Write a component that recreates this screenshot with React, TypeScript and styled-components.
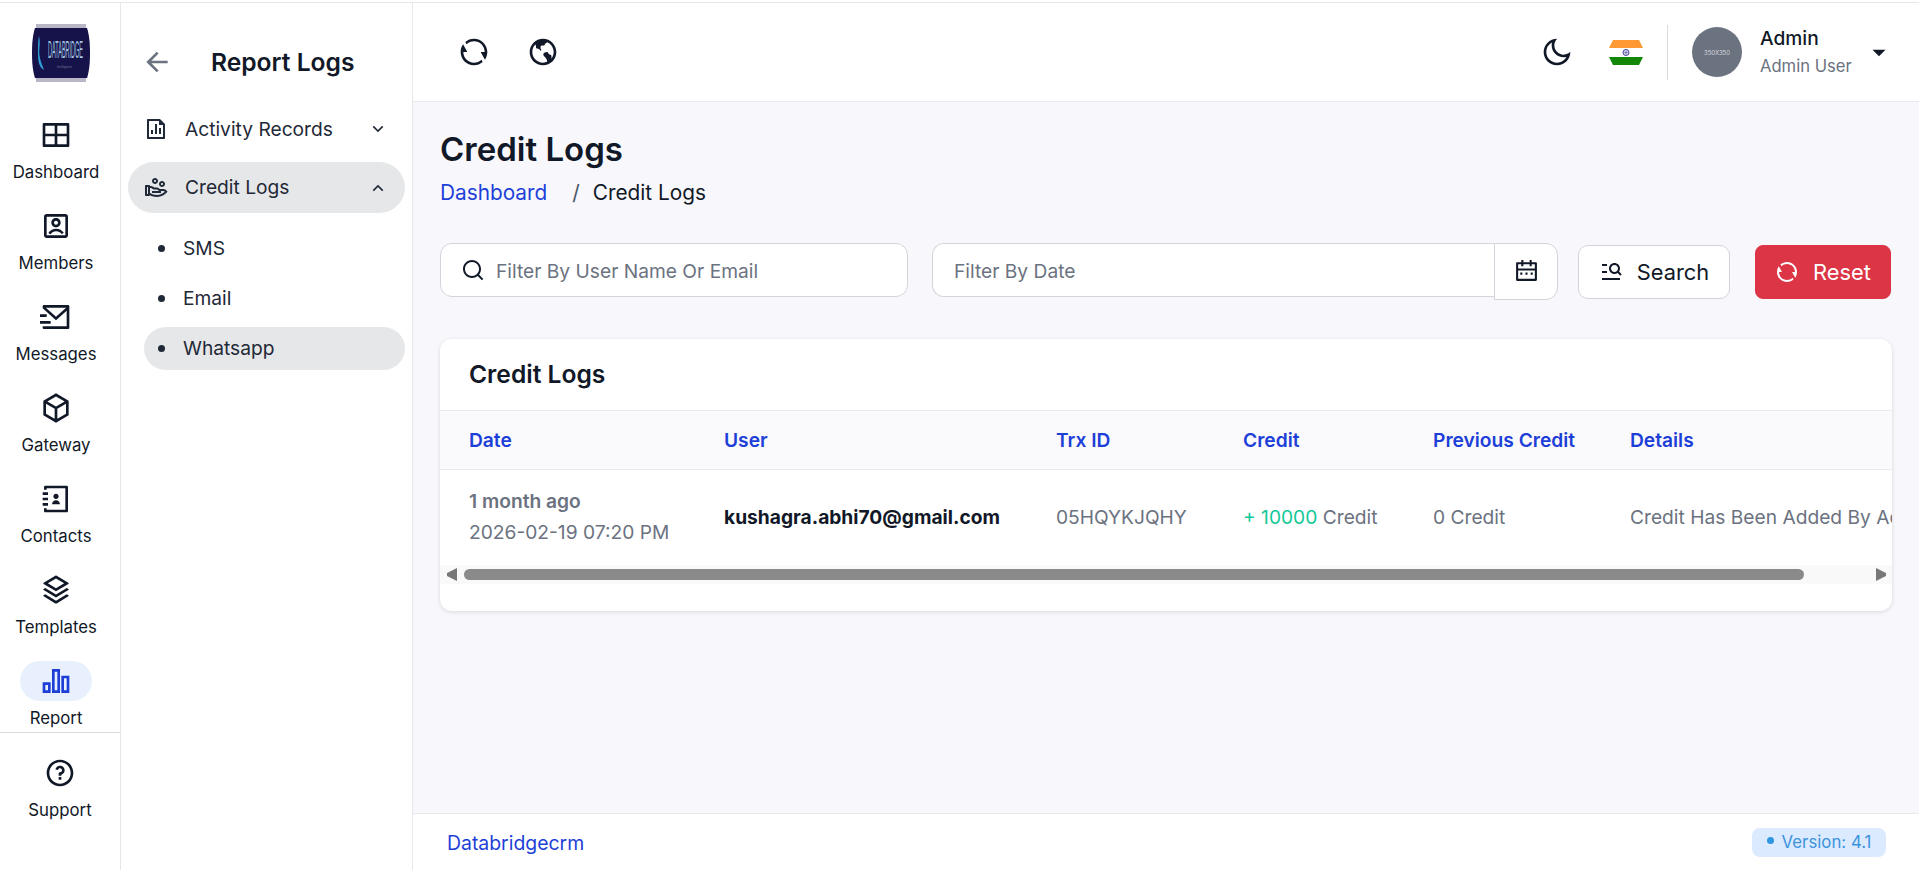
import styled, { createGlobalStyle } from 'styled-components';
import {
  RiLayoutGridLine,
  RiAccountBoxLine,
  RiMailSendLine,
  RiBox3Line,
  RiContactsBook3Line,
  RiStackLine,
  RiQuestionLine,
  RiFileChartLine,
  RiHandCoinLine,
  RiArrowLeftLine,
  RiArrowDownSLine,
  RiArrowUpSLine,
  RiArrowDownSFill,
  RiRefreshLine,
  RiEarthLine,
  RiMoonLine,
  RiSearchLine,
  RiCalendar2Line,
  RiMenuSearchLine,
} from 'react-icons/ri';

const GlobalStyle = createGlobalStyle`
  * { box-sizing: border-box; }
  html, body { margin: 0; padding: 0; height: 100%; background: #fff; overflow: hidden; }
  body { font-family: Inter, "Noto Sans", sans-serif; color: #111827; }
`;

const Shell = styled.div`
  height: 870px;
  padding-top: 2px;
  display: flex;
  flex-direction: column;
`;

const Body = styled.div`
  flex: 1;
  min-height: 0;
  display: flex;
  border-top: 1px solid #e5e7eb;
`;

const Rail = styled.aside`
  width: 121px;
  flex: none;
  border-right: 1px solid #e5e7eb;
  display: flex;
  flex-direction: column;
`;

const LogoWrap = styled.div`
  padding: 21px 0 0 32px;
  height: 112px;
  flex: none;
`;

const RailNav = styled.nav`
  padding-right: 8px;
  display: flex;
  flex-direction: column;
  gap: 23px;
`;

const RailItem = styled.a`
  display: flex;
  flex-direction: column;
  align-items: center;
  height: 68px;
  font-size: 16.8px;
  font-weight: 400;
  color: #111827;
`;

const RailIcon = styled.span<{ $active?: boolean }>`
  width: 72px;
  height: 41px;
  border-radius: 21px;
  display: flex;
  align-items: center;
  justify-content: center;
  font-size: 32px;
  color: ${(p) => (p.$active ? '#1d3fd8' : '#111827')};
  background: ${(p) => (p.$active ? '#e8f0fd' : 'transparent')};
`;

const RailLabel = styled.span`
  margin-top: 7px;
  line-height: 21px;
`;

const RailBottom = styled.div`
  margin-top: 3px;
  border-top: 1px solid #d8dbe2;
  padding-top: 20px;
`;

const Panel = styled.aside`
  width: 292px;
  flex: none;
  border-right: 1px solid #e5e7eb;
  padding: 37px 7px 0;
`;

const PanelHead = styled.div`
  height: 44px;
  padding-left: 13px;
  display: flex;
  align-items: center;
  gap: 38px;
  margin-bottom: 19px;
  color: #6b7280;
  font-size: 32px;

  svg { flex: none; }
`;

const PanelTitle = styled.h2`
  margin: 0;
  font-size: 24.6px;
  line-height: 30px;
  font-weight: 600;
  color: #111827;
`;

const MenuItem = styled.div<{ $open?: boolean }>`
  height: 51px;
  margin-bottom: 8px;
  padding: 0 17px 0 16px;
  border-radius: 26px;
  display: flex;
  align-items: center;
  gap: 17px;
  font-size: 19.2px;
  color: #1f2937;
  background: ${(p) => (p.$open ? '#e6e7e9' : 'transparent')};
`;

const MenuIcon = styled.span`
  font-size: 24px;
  display: flex;
  color: #1f2937;
`;

const MenuText = styled.span<{ $open?: boolean }>`
  flex: 1;
  padding-bottom: ${(p) => (p.$open ? '1px' : '0')};
  padding-top: ${(p) => (p.$open ? '0' : '1px')};
`;

const Chevron = styled.span`
  font-size: 20px;
  display: flex;
  color: #1f2937;
`;

const SubMenu = styled.ul`
  list-style: none;
  margin: 14px 0 0 16px;
  padding: 0;
  display: flex;
  flex-direction: column;
  gap: 7px;
`;

const SubItem = styled.li<{ $active?: boolean }>`
  height: 43px;
  padding: 0 0 2px 14px;
  border-radius: 22px;
  display: flex;
  align-items: center;
  gap: 18px;
  font-size: 19.2px;
  color: #1f2937;
  background: ${(p) => (p.$active ? '#e6e7e9' : 'transparent')};

  &::before {
    content: '';
    width: 7px;
    height: 7px;
    margin-top: 2px;
    border-radius: 50%;
    background: #1f2937;
  }
`;

const Main = styled.div`
  flex: 1;
  min-width: 0;
  display: flex;
  flex-direction: column;
  background: #f8f8fc;
`;

const Topbar = styled.header`
  height: 99px;
  flex: none;
  background: #fff;
  border-bottom: 1px solid #e9eaee;
  padding: 0 27px 0 45px;
  display: flex;
  align-items: center;
  justify-content: space-between;
`;

const TopGroup = styled.div`
  display: flex;
  align-items: center;
`;

const TopIcon = styled.span`
  width: 32px;
  height: 32px;
  margin-right: 37px;
  display: flex;
  align-items: center;
  justify-content: center;
  font-size: 32px;
  color: #111827;
`;

const MoonIcon = styled(TopIcon)`
  margin-right: 36px;
`;

const FlagWrap = styled.span`
  width: 34px;
  height: 25px;
  margin-right: 24px;
  display: flex;
`;

const TopDivider = styled.span`
  width: 1px;
  height: 55px;
  background: #d8dbe2;
  margin-right: 24px;
`;

const Avatar = styled.span`
  width: 50px;
  height: 50px;
  border-radius: 50%;
  background: #6b7280;
  color: #d7d9de;
  font-size: 6px;
  display: flex;
  align-items: center;
  justify-content: center;
`;

const UserInfo = styled.div`
  margin-left: 18px;
  width: 106px;
`;

const UserName = styled.div`
  font-size: 19.2px;
  line-height: 26px;
  margin-top: -1px;
  font-weight: 500;
  color: #111827;
`;

const UserRole = styled.div`
  font-size: 16.6px;
  line-height: 24px;
  margin-top: 3px;
  color: #6b7280;
`;

const Caret = styled.span`
  font-size: 26px;
  display: flex;
  color: #111827;
`;

const Content = styled.main`
  flex: 1;
  min-height: 0;
  padding: 27px 27px 0;
`;

const PageTitle = styled.h1`
  margin: 0;
  font-size: 33px;
  line-height: 40px;
  font-weight: 600;
  color: #111827;
`;

const Breadcrumb = styled.div`
  margin-top: 9px;
  height: 28px;
  display: flex;
  align-items: center;
  font-size: 20.8px;
  color: #111827;
`;

const CrumbLink = styled.a`
  color: #1d3fd8;
`;

const CrumbSep = styled.span`
  margin: 0 13px 0 25px;
  color: #4b5563;
`;

const FilterRow = styled.div`
  margin-top: 37px;
  display: flex;
  align-items: flex-start;
`;

const FieldBox = styled.div`
  width: 468px;
  height: 54px;
  flex: none;
  margin-right: 24px;
  background: #fff;
  border: 1px solid #d3d5dc;
  border-radius: 12px;
  display: flex;
  align-items: center;
  padding: 0 22px 0 20px;
  gap: 11px;
  font-size: 24px;
  color: #111827;
`;

const Placeholder = styled.span`
  font-size: 19.2px;
  padding-top: 2px;
  color: #6b7280;
`;

const DateGroup = styled.div`
  flex: 1;
  display: flex;
  margin-right: 20px;
`;

const DateField = styled.div`
  flex: 1;
  height: 54px;
  background: #fff;
  border: 1px solid #d3d5dc;
  border-right: 0;
  border-radius: 12px 0 0 12px;
  display: flex;
  align-items: center;
  padding-left: 21px;
`;

const DateButton = styled.span`
  width: 64px;
  height: 57px;
  background: #fff;
  border: 1px solid #d3d5dc;
  border-radius: 0 12px 12px 0;
  display: flex;
  align-items: center;
  justify-content: center;
  font-size: 25px;
  color: #111827;
`;

const ActionButton = styled.button`
  height: 54px;
  margin-top: 2px;
  flex: none;
  font: inherit;
  font-size: 21.8px;
  display: flex;
  align-items: center;
  justify-content: center;
  gap: 14px;
  padding: 0;

  svg { flex: none; }
`;

const SearchButton = styled(ActionButton)`
  width: 152px;
  margin-right: 25px;
  border-radius: 10px;
  border: 1px solid #d3d5dc;
  background: #fff;
  color: #111827;
`;

const ResetButton = styled(ActionButton)`
  width: 136px;
  margin-right: 1px;
  border-radius: 8px;
  border: 1px solid #dc3545;
  background: #dc3545;
  color: #fff;
`;

const Card = styled.section`
  margin-top: 39px;
  height: 272px;
  background: #fff;
  border-radius: 12px;
  box-shadow: 0 1px 4px rgba(17, 24, 39, 0.14);
  overflow: hidden;
`;

const CardHead = styled.div`
  height: 72px;
  padding: 0 29px 2px;
  display: flex;
  align-items: center;
  border-bottom: 1px solid #eaebef;
`;

const CardTitle = styled.h3`
  margin: 0;
  font-size: 24.6px;
  font-weight: 600;
  color: #111827;
`;

const TableClip = styled.div`
  overflow: hidden;
`;

const Table = styled.table`
  width: 1528px;
  table-layout: fixed;
  border-collapse: separate;
  border-spacing: 0;
  font-size: 19.2px;
`;

const Th = styled.th<{ $w: number }>`
  width: ${(p) => p.$w}px;
  height: 59px;
  padding: 0 0 0 29px;
  text-align: left;
  font-weight: 600;
  color: #1d3fd8;
  background: #fafafc;
  border-bottom: 1px solid #eaebef;
`;

const Td = styled.td`
  height: 95px;
  padding: 0 0 2px 29px;
  color: #6b7280;
  white-space: nowrap;
`;

const WhenAgo = styled.div`
  font-weight: 600;
  line-height: 24px;
`;

const WhenExact = styled.div`
  margin-top: 7px;
  line-height: 24px;
`;

const UserMail = styled.span`
  font-weight: 700;
  color: #111827;
`;

const Plus = styled.span`
  color: #10c998;
`;

const ScrollBar = styled.div`
  height: 19px;
  padding: 0 6px 0 7px;
  background: #f9f9f9;
  display: flex;
  align-items: center;
  justify-content: space-between;
  color: #777;
`;

const ScrollThumb = styled.div`
  width: 1340px;
  height: 11px;
  margin-right: auto;
  margin-left: 7px;
  border-radius: 6px;
  background: #8a8a8a;
`;

const Footer = styled.footer`
  height: 57px;
  flex: none;
  background: #fff;
  border-top: 1px solid #e9eaee;
  padding: 0 33px 0 34px;
  display: flex;
  align-items: center;
  justify-content: space-between;
`;

const FootLink = styled.a`
  font-size: 19.4px;
  padding-top: 2px;
  color: #1d3fd8;
`;

const VersionBadge = styled.span`
  height: 29px;
  width: 134px;
  border-radius: 8px;
  background: #dbeafe;
  color: #3b93dd;
  font-size: 16.8px;
  display: flex;
  align-items: center;
  justify-content: center;
  gap: 8px;

  &::before {
    content: '';
    width: 7px;
    height: 7px;
    border-radius: 50%;
    background: #2f96e0;
    margin-top: -3px;
  }
`;

function Logo() {
  return (
    <svg width="58" height="58" viewBox="0 0 58 58">
      <rect x="4" y="0" width="50" height="58" fill="#b9b6c6" />
      <path d="M3 4h52c2 6 3 14 3 25s-1 19-3 25H3C1 48 0 40 0 29S1 10 3 4z" fill="#16124a" />
      <path d="M7 12c2 8-1 14 1 22 1 5 3 9 4 12-4-2-6-7-6-16s0-13 1-18z" fill="#2f9fd8" />
      <g transform="translate(16 34) scale(1 3.8)">
        <text fontFamily="Liberation Sans, sans-serif" fontSize="6.4" fill="#a3c8e0" textLength="35" lengthAdjust="spacingAndGlyphs">
          DATABRIDGE
        </text>
      </g>
      <text x="25" y="44" fontFamily="Liberation Sans, sans-serif" fontSize="3" fill="#6e7796">
        Intelligence
      </text>
    </svg>
  );
}

function IndiaFlag() {
  return (
    <svg width="34" height="25" viewBox="0 0 34 25">
      <defs>
        <clipPath id="flagClip">
          <path d="M4 0h26l4 8v9l-4 8H4L0 17V8z" />
        </clipPath>
      </defs>
      <g clipPath="url(#flagClip)">
        <rect width="34" height="8" fill="#ff9933" />
        <rect y="8" width="34" height="9" fill="#fff" />
        <rect y="17" width="34" height="8" fill="#138808" />
      </g>
      <circle cx="17" cy="12.5" r="3" fill="none" stroke="#2b2b90" strokeWidth="0.9" />
      <path d="M15 10.5l4 4M19 10.5l-4 4M17 9.8v5.4M14.3 12.5h5.4" stroke="#2b2b90" strokeWidth="0.4" />
    </svg>
  );
}

function ReportBars() {
  return (
    <svg width="32" height="32" viewBox="0 0 24 24" fill="currentColor">
      <path d="M2 13h6v8H2v-8zM16 8h6v13h-6V8zM9 3h6v18H9V3zM4 15v4h2v-4H4zM11 5v14h2V5h-2zM18 10v9h2v-9h-2z" />
    </svg>
  );
}

function ScrollArrow({ flip }: { flip?: boolean }) {
  return (
    <svg width="10" height="13" viewBox="0 0 10 13" fill="currentColor">
      <path d={flip ? 'M0 0l10 5v3L0 13z' : 'M10 0L0 5v3l10 5z'} />
    </svg>
  );
}

const railItems = [
  { label: 'Dashboard', icon: <RiLayoutGridLine /> },
  { label: 'Members', icon: <RiAccountBoxLine /> },
  { label: 'Messages', icon: <RiMailSendLine /> },
  { label: 'Gateway', icon: <RiBox3Line /> },
  { label: 'Contacts', icon: <RiContactsBook3Line /> },
  { label: 'Templates', icon: <RiStackLine /> },
  { label: 'Report', icon: <ReportBars />, active: true },
];

const columns = [
  { title: 'Date', width: 255 },
  { title: 'User', width: 332 },
  { title: 'Trx ID', width: 187 },
  { title: 'Credit', width: 190 },
  { title: 'Previous Credit', width: 197 },
  { title: 'Details', width: 367 },
];

export default function App() {
  return (
    <>
      <GlobalStyle />
      <Shell>
        <Body>
          <Rail>
            <LogoWrap>
              <Logo />
            </LogoWrap>
            <RailNav>
              {railItems.map((item) => (
                <RailItem key={item.label}>
                  <RailIcon $active={item.active}>{item.icon}</RailIcon>
                  <RailLabel>{item.label}</RailLabel>
                </RailItem>
              ))}
            </RailNav>
            <RailBottom>
              <RailItem>
                <RailIcon>
                  <RiQuestionLine />
                </RailIcon>
                <RailLabel>Support</RailLabel>
              </RailItem>
            </RailBottom>
          </Rail>

          <Panel>
            <PanelHead>
              <RiArrowLeftLine />
              <PanelTitle>Report Logs</PanelTitle>
            </PanelHead>
            <MenuItem>
              <MenuIcon>
                <RiFileChartLine />
              </MenuIcon>
              <MenuText>Activity Records</MenuText>
              <Chevron>
                <RiArrowDownSLine />
              </Chevron>
            </MenuItem>
            <MenuItem $open>
              <MenuIcon>
                <RiHandCoinLine />
              </MenuIcon>
              <MenuText $open>Credit Logs</MenuText>
              <Chevron>
                <RiArrowUpSLine />
              </Chevron>
            </MenuItem>
            <SubMenu>
              <SubItem>SMS</SubItem>
              <SubItem>Email</SubItem>
              <SubItem $active>Whatsapp</SubItem>
            </SubMenu>
          </Panel>

          <Main>
            <Topbar>
              <TopGroup>
                <TopIcon>
                  <RiRefreshLine />
                </TopIcon>
                <TopIcon>
                  <RiEarthLine />
                </TopIcon>
              </TopGroup>
              <TopGroup>
                <MoonIcon>
                  <RiMoonLine />
                </MoonIcon>
                <FlagWrap>
                  <IndiaFlag />
                </FlagWrap>
                <TopDivider />
                <Avatar>350X350</Avatar>
                <UserInfo>
                  <UserName>Admin</UserName>
                  <UserRole>Admin User</UserRole>
                </UserInfo>
                <Caret>
                  <RiArrowDownSFill />
                </Caret>
              </TopGroup>
            </Topbar>

            <Content>
              <PageTitle>Credit Logs</PageTitle>
              <Breadcrumb>
                <CrumbLink>Dashboard</CrumbLink>
                <CrumbSep>/</CrumbSep>
                <span>Credit Logs</span>
              </Breadcrumb>

              <FilterRow>
                <FieldBox>
                  <RiSearchLine />
                  <Placeholder>Filter By User Name Or Email</Placeholder>
                </FieldBox>
                <DateGroup>
                  <DateField>
                    <Placeholder>Filter By Date</Placeholder>
                  </DateField>
                  <DateButton>
                    <RiCalendar2Line />
                  </DateButton>
                </DateGroup>
                <SearchButton>
                  <RiMenuSearchLine size={24} />
                  Search
                </SearchButton>
                <ResetButton>
                  <RiRefreshLine size={24} />
                  Reset
                </ResetButton>
              </FilterRow>

              <Card>
                <CardHead>
                  <CardTitle>Credit Logs</CardTitle>
                </CardHead>
                <TableClip>
                  <Table>
                    <thead>
                      <tr>
                        {columns.map((col) => (
                          <Th key={col.title} $w={col.width}>
                            {col.title}
                          </Th>
                        ))}
                      </tr>
                    </thead>
                    <tbody>
                      <tr>
                        <Td>
                          <WhenAgo>1 month ago</WhenAgo>
                          <WhenExact>2026-02-19 07:20 PM</WhenExact>
                        </Td>
                        <Td>
                          <UserMail>kushagra.abhi70@gmail.com</UserMail>
                        </Td>
                        <Td>05HQYKJQHY</Td>
                        <Td>
                          <Plus>+ 10000</Plus> Credit
                        </Td>
                        <Td>0 Credit</Td>
                        <Td>Credit Has Been Added By Admin</Td>
                      </tr>
                    </tbody>
                  </Table>
                </TableClip>
                <ScrollBar>
                  <ScrollArrow />
                  <ScrollThumb />
                  <ScrollArrow flip />
                </ScrollBar>
              </Card>
            </Content>

            <Footer>
              <FootLink>Databridgecrm</FootLink>
              <VersionBadge>Version: 4.1</VersionBadge>
            </Footer>
          </Main>
        </Body>
      </Shell>
    </>
  );
}
